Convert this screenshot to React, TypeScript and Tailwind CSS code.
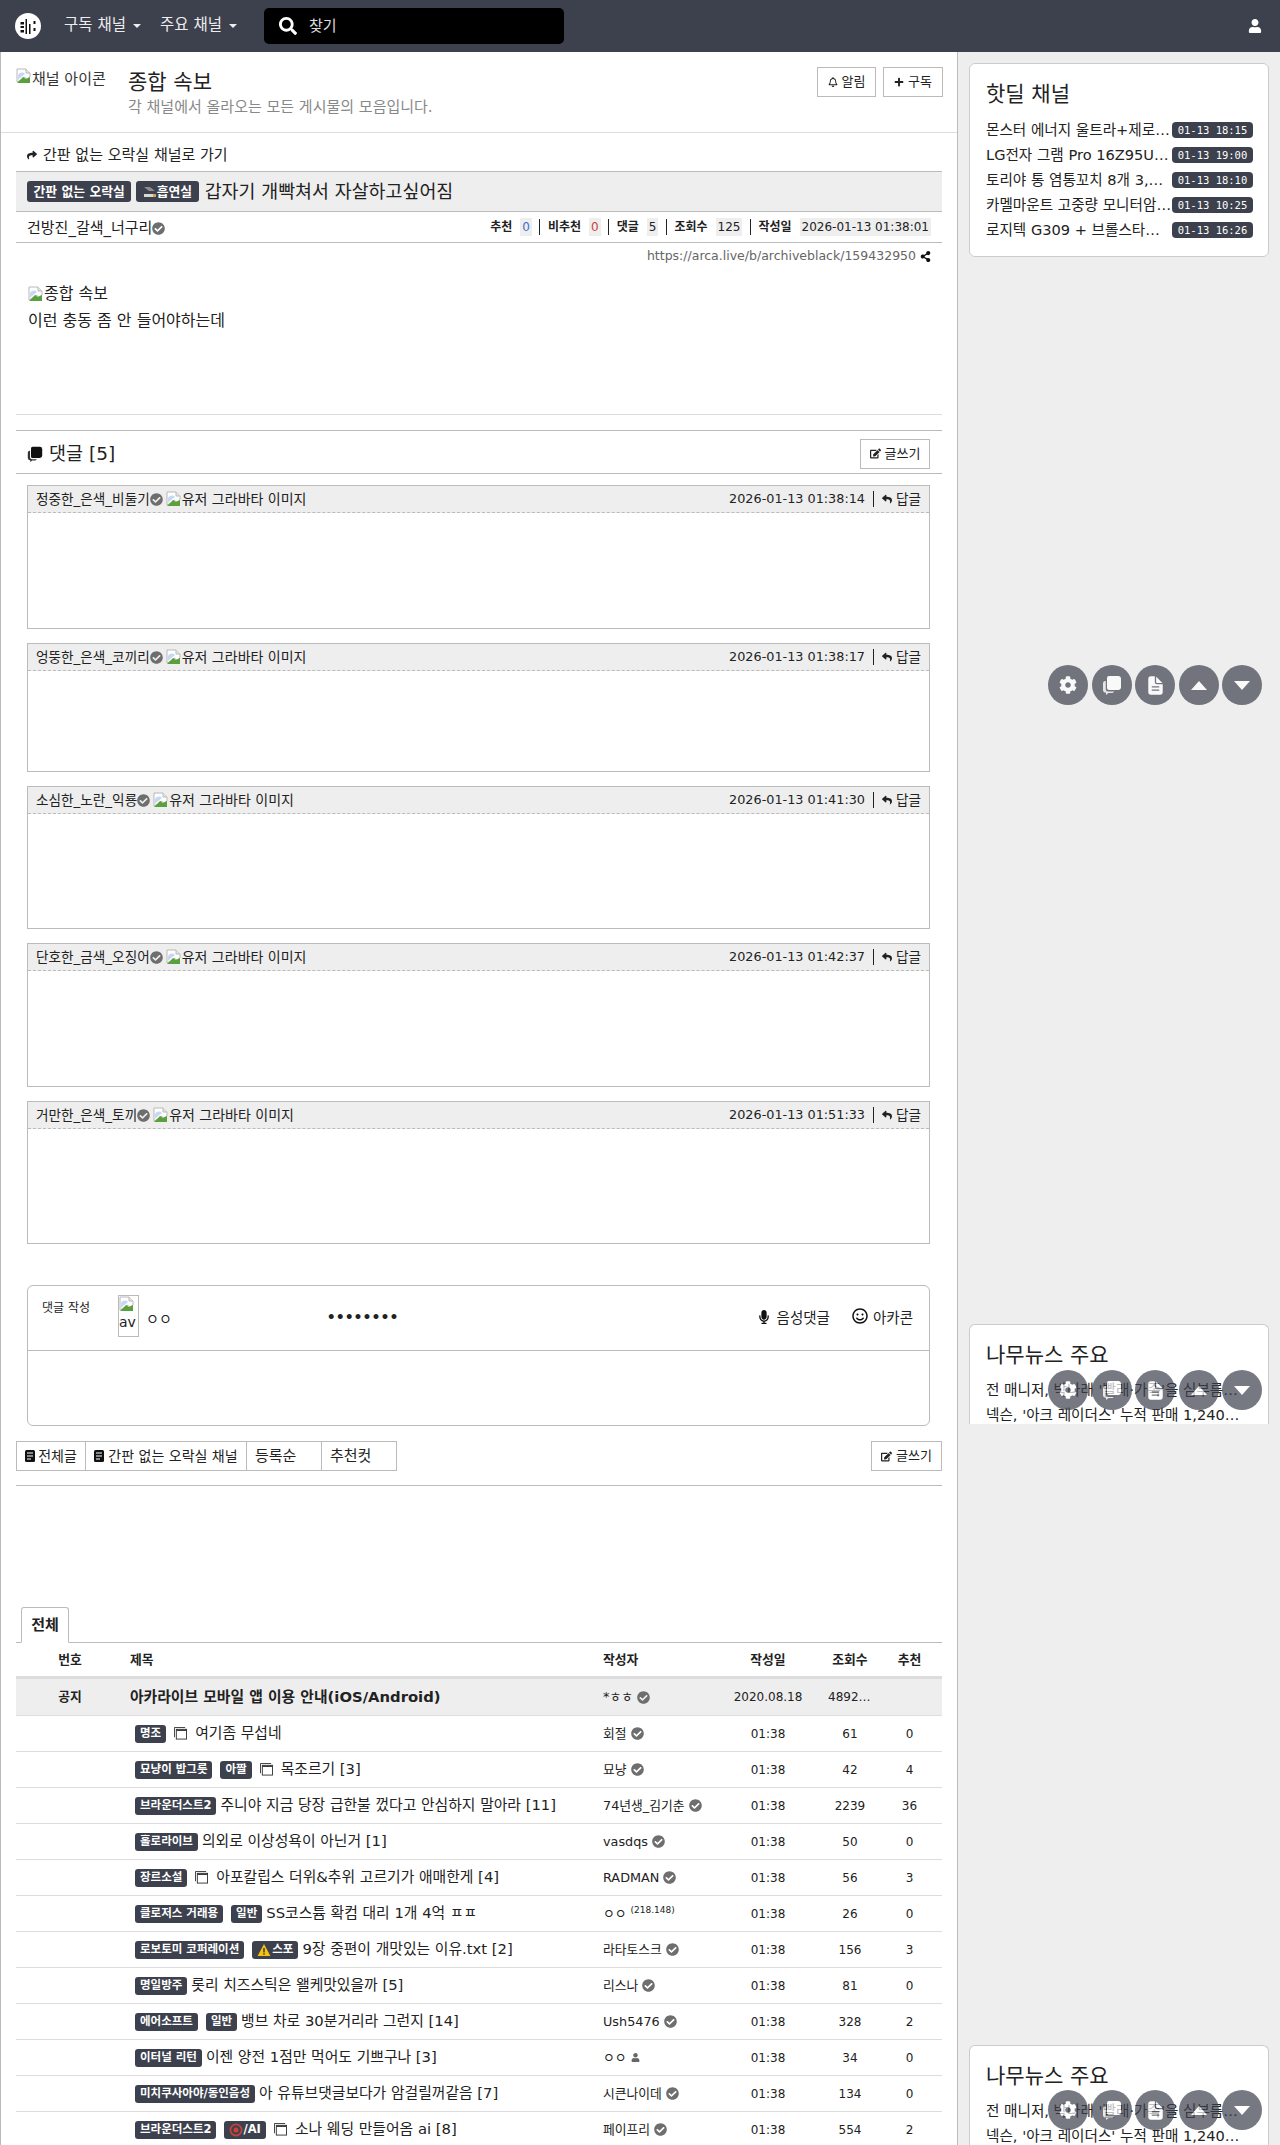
import type { ReactNode } from 'react';
import {
  FaCheckCircle,
  FaCog,
  FaEdit,
  FaMicrophone,
  FaPlus,
  FaRegBell,
  FaRegSmile,
  FaReply,
  FaSearch,
  FaShare,
  FaShareAlt,
  FaUser,
} from 'react-icons/fa';
import { IoDocumentText } from 'react-icons/io5';

type Row = {
  tags: ReactNode[];
  photo?: boolean;
  title: string;
  author: string;
  mark?: 'check' | 'ip' | 'user';
  views: string;
  up: string;
};

const rows: Row[] = [
  { tags: ['명조'], photo: true, title: '여기좀 무섭네', author: '회절', views: '61', up: '0' },
  { tags: ['묘냥이 밥그릇', '아짤'], photo: true, title: '목조르기 [3]', author: '묘냥', views: '42', up: '4' },
  { tags: ['브라운더스트2'], title: '주니야 지금 당장 급한불 껐다고 안심하지 말아라 [11]', author: '74년생_김기춘', views: '2239', up: '36' },
  { tags: ['홀로라이브'], title: '의외로 이상성욕이 아닌거 [1]', author: 'vasdqs', views: '50', up: '0' },
  { tags: ['장르소설'], photo: true, title: '아포칼립스 더위&추위 고르기가 애매한게 [4]', author: 'RADMAN', views: '56', up: '3' },
  { tags: ['클로저스 거래용', '일반'], title: 'SS코스튬 확컴 대리 1개 4억 ㅍㅍ', author: 'ㅇㅇ', mark: 'ip', views: '26', up: '0' },
  { tags: ['로보토미 코퍼레이션', <><WarnIcon />스포</>], title: '9장 중편이 개맛있는 이유.txt [2]', author: '라타토스크', views: '156', up: '3' },
  { tags: ['명일방주'], title: '롯리 치즈스틱은 왤케맛있을까 [5]', author: '리스나', views: '81', up: '0' },
  { tags: ['에어소프트', '일반'], title: '뱅브 차로 30분거리라 그런지 [14]', author: 'Ush5476', views: '328', up: '2' },
  { tags: ['이터널 리턴'], title: '이젠 양전 1점만 먹어도 기쁘구나 [3]', author: 'ㅇㅇ', mark: 'user', views: '34', up: '0' },
  { tags: ['미치쿠사아야/동인음성'], title: '아 유튜브댓글보다가 암걸릴꺼같음 [7]', author: '시큰나이데', views: '134', up: '0' },
  { tags: ['브라운더스트2', <><AdultIcon />/AI</>], photo: true, title: '소나 웨딩 만들어옴 ai [8]', author: '페이프리', views: '554', up: '2' },
];

const comments = [
  { name: '정중한_은색_비둘기', time: '2026-01-13 01:38:14', h: 'h-[144px]' },
  { name: '엉뚱한_은색_코끼리', time: '2026-01-13 01:38:17', h: 'h-[129px]' },
  { name: '소심한_노란_익룡', time: '2026-01-13 01:41:30', h: 'h-[143px]' },
  { name: '단호한_금색_오징어', time: '2026-01-13 01:42:37', h: 'h-[144px]' },
  { name: '거만한_은색_토끼', time: '2026-01-13 01:51:33', h: 'h-[143px]' },
];

const deals = [
  ['몬스터 에너지 울트라+제로 슈거 355ml 24캔', '01-13 18:15'],
  ['LG전자 그램 Pro 16Z95U-GS5WK 노트북', '01-13 19:00'],
  ['토리야 통 염통꼬치 8개 3,900원 무료배송', '01-13 18:10'],
  ['카멜마운트 고중량 모니터암 싱글 CMA-2', '01-13 10:25'],
  ['로지텍 G309 + 브롤스타즈 마우스패드 세트', '01-13 16:26'],
];

function LogoIcon() {
  return (
    <svg viewBox="0 0 26 26" className="h-[26px] w-[26px]">
      <circle cx="13" cy="13" r="13" fill="#fff" />
      <rect x="5.5" y="9" width="3.5" height="2.5" fill="#111" />
      <rect x="5.5" y="13" width="3.5" height="2" fill="#111" />
      <rect x="5.5" y="17" width="3.5" height="2.5" fill="#111" />
      <rect x="10.5" y="6" width="1.5" height="15" fill="#111" />
      <rect x="14" y="11" width="1.5" height="10" fill="#111" />
      <rect x="18.5" y="8" width="2" height="3" fill="#111" />
      <rect x="18.5" y="15" width="2" height="3" fill="#111" />
    </svg>
  );
}

function BrokenImage() {
  return (
    <svg viewBox="0 0 16 16" className="h-4 w-4 shrink-0">
      <path d="M1 1h9l4 4v4l-3 2-3-2-3 3-4 2z" fill="#fff" stroke="#b9b9b9" strokeWidth="1" />
      <path d="M2 7c2-3 5-3 7-1l-5 4-2 2z" fill="#c6d8f4" />
      <path d="M1 15l6-6 3 2 4-2v6z" fill="#5aa13d" />
      <path d="M10 1v4h4" fill="#e8e8e8" stroke="#b9b9b9" />
    </svg>
  );
}

function WarnIcon() {
  return (
    <svg viewBox="0 0 14 14" className="mr-px h-3.5 w-3.5">
      <path d="M7 1l6.4 12H.6z" fill="#f5c211" />
      <rect x="6.3" y="5" width="1.4" height="4.5" fill="#333" />
      <rect x="6.3" y="10.3" width="1.4" height="1.4" fill="#333" />
    </svg>
  );
}

function AdultIcon() {
  return (
    <svg viewBox="0 0 14 14" className="h-3.5 w-3.5">
      <circle cx="7" cy="7" r="5.6" fill="none" stroke="#c9423a" strokeWidth="1.8" />
      <circle cx="7" cy="7" r="2.5" fill="#c9423a" />
    </svg>
  );
}

function SmokeIcon() {
  return (
    <svg viewBox="0 0 14 14" className="h-3.5 w-3.5">
      <path d="M1 2h6l5 4H6z" fill="#8d8d8d" />
      <rect x="1" y="9" width="9" height="3" fill="#d8d8d8" />
      <rect x="10" y="9" width="3" height="3" fill="#e0a040" />
    </svg>
  );
}

function PhotosIcon() {
  return (
    <svg viewBox="0 0 14 14" className="h-[13px] w-[13px] shrink-0" fill="none" stroke="#333" strokeWidth="1">
      <path d="M.5 11V.5H12" />
      <rect x="2.5" y="2.5" width="11" height="10.5" fill="#fff" />
      <path d="M2.5 3.5h11" strokeWidth="1.5" />
    </svg>
  );
}

// stacked chat bubbles, same shape in the heading and on the floating button
function ChatsIcon({ className }: { className: string }) {
  return (
    <svg viewBox="0 0 20 20" className={className} fill="currentColor">
      <path d="M7 1h9a3 3 0 0 1 3 3v8a3 3 0 0 1-3 3H7a2 2 0 0 1-2-2V3a2 2 0 0 1 2-2z" />
      <path d="M3.8 6v8a2.5 2.5 0 0 0 2.5 2.5h6.2l-2 1.5H6.5L4 20v-2.2A3 3 0 0 1 1 15V8a2.5 2.5 0 0 1 2.8-2z" opacity=".85" />
    </svg>
  );
}

function ListIcon() {
  return (
    <svg viewBox="0 0 10 12" className="h-3 w-[10px] shrink-0">
      <rect width="10" height="12" rx="1.5" fill="#111" />
      <path d="M2 3h6M2 6h6M2 9h4" stroke="#fff" strokeWidth="1.2" />
    </svg>
  );
}

function Check() {
  return <FaCheckCircle className="shrink-0 text-[13px] text-[#6e6e6e]" />;
}

function Tag({ children }: { children: ReactNode }) {
  return (
    <span className="inline-flex h-[18px] items-center rounded-[3px] bg-[#3d414d] px-[5px] text-[11.5px] font-bold whitespace-nowrap text-white">
      {children}
    </span>
  );
}

function OutlineBtn({ children, className }: { children: ReactNode; className: string }) {
  return (
    <div className={`flex items-center justify-center gap-1 border border-[#bbb] bg-white text-[13px] text-[#222] ${className}`}>
      {children}
    </div>
  );
}

function Floaters({ className }: { className: string }) {
  return (
    <div className={`absolute left-[1048px] flex gap-[3.5px] opacity-70 ${className}`}>
      <Floater><FaCog className="text-[18px]" /></Floater>
      <Floater><ChatsIcon className="h-5 w-5" /></Floater>
      <Floater><IoDocumentText className="text-[21px]" /></Floater>
      <Floater><span className="h-0 w-0 border-x-[8px] border-b-[9px] border-x-transparent border-b-white" /></Floater>
      <Floater><span className="h-0 w-0 border-x-[8px] border-t-[9px] border-x-transparent border-t-white" /></Floater>
    </div>
  );
}

function Floater({ children }: { children: ReactNode }) {
  return <div className="flex h-10 w-10 items-center justify-center rounded-full bg-[#3d414d] text-white">{children}</div>;
}

function Comment({ name, time, h }: { name: string; time: string; h: string }) {
  return (
    <div className={`mr-[12px] mb-[14px] ml-[11px] border border-[#bbb] ${h}`}>
      <div className="flex h-[27px] items-center border-b border-dashed border-[#bbb] bg-[#eee] pr-2 pl-2 text-[13.6px] text-[#222]">
        <span>{name}</span>
        <Check />
        <span className="ml-[3px] flex items-center text-[14px]"><BrokenImage />유저 그라바타 이미지</span>
        <span className="ml-auto text-[12.8px]">{time}</span>
        <span className="mx-2 h-4 w-px bg-[#222]" />
        <FaReply className="mr-1 text-[10px]" />
        <span>답글</span>
      </div>
    </div>
  );
}

function Stat({ label, value, color }: { label: string; value: string; color?: string }) {
  return (
    <>
      <span className="font-bold">{label}</span>
      <span className={`ml-2 bg-[#eee] px-0.5 ${color ?? ''}`}>{value}</span>
    </>
  );
}

function Sep() {
  return <span className="mx-[7.5px] h-4 w-px bg-[#222]" />;
}

function NewsCard({ className }: { className: string }) {
  return (
    <div className={`mx-[11px] overflow-hidden rounded-t-md border-x border-t border-[#ccc] bg-white pt-[15px] pr-[26px] pl-4 ${className}`}>
      <div className="text-[21px] leading-[30px] text-[#222]">나무뉴스 주요</div>
      <div className="mt-[7px] truncate text-[14.6px] leading-[25px] text-[#222]">전 매니저, 박나래 '빨래·가족'을 심부름 시켰다 주장</div>
      <div className="truncate text-[14.6px] leading-[25px] text-[#222]">넥슨, '아크 레이더스' 누적 판매 1,240만장 돌파했다</div>
    </div>
  );
}

export default function App() {
  return (
    <div className="relative h-[2145px] overflow-hidden bg-[#eee] [font-family:'DejaVu_Sans','Noto_Sans_CJK_KR',sans-serif]">
      <header className="flex h-[52px] items-center bg-[#3d414d] text-[15.5px] text-[#eee]">
        <div className="ml-[15px]"><LogoIcon /></div>
        <div className="ml-[23px] flex w-[96px] items-center gap-[7px]">구독 채널<span className="h-0 w-0 border-x-[4px] border-t-[4px] border-x-transparent border-t-[#eee]" /></div>
        <div className="flex w-[104px] items-center gap-[7px]">주요 채널<span className="h-0 w-0 border-x-[4px] border-t-[4px] border-x-transparent border-t-[#eee]" /></div>
        <div className="flex h-9 w-[300px] items-center rounded-[5px] bg-black pl-[15px] text-[15px] text-[#ddd]">
          <FaSearch className="text-[18px] text-white" />
          <span className="ml-3">찾기</span>
        </div>
        <FaUser className="mr-[18px] ml-auto text-[14px] text-white" />
      </header>

      <div className="flex">
        <main className="h-[2093px] w-[958px] shrink-0 border-x border-[#bbb] bg-white">
          <section className="relative flex h-[81px] border-b border-[#ddd] pl-[15px]">
            <div className="mt-[16px] flex h-[20px] w-[112px] shrink-0 items-start overflow-hidden text-[15px] whitespace-nowrap text-[#333]"><span className="flex w-[96px] overflow-hidden"><BrokenImage />채널 아이콘</span></div>
            <div>
              <h1 className="mt-[17px] text-[21px] leading-[26px] text-[#222]">종합 속보</h1>
              <p className="mt-[2px] text-[15px] leading-5 text-[#888]">각 채널에서 올라오는 모든 게시물의 모음입니다.</p>
            </div>
            <div className="absolute top-[15px] right-[14px] flex gap-[7px]">
              <OutlineBtn className="h-[30px] w-[59px]"><FaRegBell className="text-[10px]" />알림</OutlineBtn>
              <OutlineBtn className="h-[30px] w-[60px]"><FaPlus className="text-[10px]" />구독</OutlineBtn>
            </div>
          </section>

          <div className="px-[15px]">
            <div className="flex h-[38px] items-center pt-[6px] pl-[11px] text-[15px] text-[#222]">
              <FaShare className="mr-[6px] text-[10px]" />간판 없는 오락실 채널로 가기
            </div>
            <div className="flex h-[41px] items-center gap-[5px] border-y border-[#bbb] bg-[#eee] pl-[11px]">
              <span className="inline-flex h-[21px] items-center rounded-[3px] bg-[#3d414d] px-[6.5px] text-[12.8px] font-bold text-white">간판 없는 오락실</span>
              <span className="inline-flex h-[21px] items-center rounded-[3px] bg-[#3d414d] px-[6.5px] text-[12.8px] font-bold text-white"><SmokeIcon />흡연실</span>
              <span className="ml-px text-[18.4px] text-[#222]">갑자기 개빡쳐서 자살하고싶어짐</span>
            </div>
            <div className="flex h-[31px] items-center border-b border-[#bbb] pr-[11px] pl-[11px] text-[12px] text-[#222]">
              <span className="mr-auto flex items-center pt-[2px] text-[15px]">건방진_갈색_너구리<Check /></span>
              <Stat label="추천" value="0" color="text-[#3d6fd0]" /><Sep />
              <Stat label="비추천" value="0" color="text-[#c9423a]" /><Sep />
              <Stat label="댓글" value="5" /><Sep />
              <Stat label="조회수" value="125" /><Sep />
              <Stat label="작성일" value="2026-01-13 01:38:01" />
            </div>
            <div className="flex h-[26px] items-center justify-end pr-[11px] text-[12.5px] text-[#666]">
              https://arca.live/b/archiveblack/159432950<FaShareAlt className="ml-1 text-[11px] text-[#111]" />
            </div>

            <div className="h-[146px] border-b border-[#ddd] pt-[14px] pl-[12px] text-[16px] text-[#222]">
              <div className="flex h-[21px] items-center"><BrokenImage />종합 속보</div>
              <div className="mt-[6px] leading-[21px]">이런 충동 좀 안 들어야하는데</div>
            </div>

            <div className="mt-[15px] flex h-[44px] items-center border-y border-[#bbb] pt-[3px] pr-3 pl-[11px]">
              <ChatsIcon className="mr-[6px] h-4 w-4 text-[#111]" />
              <span className="text-[18.5px] text-[#222]">댓글 [5]</span>
              <OutlineBtn className="ml-auto h-[30px] w-[70px]"><FaEdit className="text-[11px]" />글쓰기</OutlineBtn>
            </div>

            <div className="mt-[11px]">
              {comments.map((c) => <Comment key={c.name} {...c} />)}
            </div>

            <div className="mt-[41px] mr-[12px] ml-[11px] h-[141px] rounded-md border border-[#bbb]">
              <div className="flex h-[65px] border-b border-[#bbb] text-[14.5px] text-[#222]">
                <span className="mt-[13px] ml-[14px] w-[76px] text-[12px]">댓글 작성</span>
                <div className="mt-[9px] h-[42px] w-[21px] overflow-hidden border border-[#bbb] text-[14px]"><BrokenImage />av</div>
                <span className="mt-[23px] ml-[7px] text-[14px]">ㅇㅇ</span>
                <span className="mt-[21px] ml-[155px] text-[14px] font-bold">••••••••</span>
                <span className="mt-[22px] ml-auto flex items-start gap-[6px]"><FaMicrophone className="mt-[2px] text-[14px] text-[#111]" />음성댓글</span>
                <span className="mt-[22px] mr-[16px] ml-[22px] flex items-start gap-[5px]"><FaRegSmile className="text-[16px] text-[#111]" />아카콘</span>
              </div>
            </div>

            <div className="mt-[15px] flex h-[45px] items-start border-b border-[#bbb] text-[14px] text-[#222]">
              <div className="flex h-[30px] w-[70px] items-center justify-center gap-[3px] border border-[#bbb]"><ListIcon />전체글</div>
              <div className="flex h-[30px] w-[161px] items-center justify-center gap-[4px] border border-l-0 border-[#bbb]"><ListIcon />간판 없는 오락실 채널</div>
              <div className="flex h-[30px] w-[75px] items-center border border-l-0 border-[#bbb] pl-2 text-[15px]">등록순</div>
              <div className="flex h-[30px] w-[75px] items-center border border-l-0 border-[#bbb] pl-2 text-[15px]">추천컷</div>
              <OutlineBtn className="ml-auto h-[30px] w-[71px]"><FaEdit className="text-[11px]" />글쓰기</OutlineBtn>
            </div>

            <div className="mt-[121px] flex h-[36px] items-end border-b border-[#bbb] pl-[5px]">
              <div className="-mb-px flex h-[36px] w-[48px] items-center justify-center rounded-t-[3px] border border-b-white border-[#bbb] bg-white text-[15px] font-bold text-[#222]">전체</div>
            </div>

            <div className="flex h-[36px] items-center border-b-[3px] border-[#ddd] text-[12.8px] font-bold text-[#222]">
              <div className="w-[108px] text-center">번호</div>
              <div className="w-[473px] pl-[6px]">제목</div>
              <div className="w-[127px] pl-[6px]">작성자</div>
              <div className="w-[88px] text-center">작성일</div>
              <div className="w-[76px] text-center">조회수</div>
              <div className="w-[43px] text-center">추천</div>
            </div>

            <div className="flex h-[37px] items-center border-b border-[#ddd] bg-[#eee] text-[13px] text-[#222]">
              <div className="w-[108px] text-center text-[12.8px] font-bold">공지</div>
              <div className="w-[473px] pl-[6px] text-[14.8px] font-bold">아카라이브 모바일 앱 이용 안내(iOS/Android)</div>
              <div className="flex w-[127px] items-center gap-1 pl-[6px] text-[12.8px]">*ㅎㅎ<Check /></div>
              <div className="w-[88px] text-center text-[12px]">2020.08.18</div>
              <div className="w-[76px] truncate px-4 text-center text-[12px]">48927283</div>
              <div className="w-[43px]" />
            </div>

            {rows.map((r) => (
              <div key={r.title} className="flex h-9 items-center border-b border-[#ddd] text-[12px] text-[#222]">
                <div className="w-[108px]" />
                <div className="flex w-[473px] items-center pl-[11px] text-[14.8px] whitespace-nowrap">
                  {r.tags.map((t, i) => (
                    <span key={i} className="mr-2 inline-flex"><Tag>{t}</Tag></span>
                  ))}
                  {r.photo && <span className="mr-3"><PhotosIcon /></span>}
                  <span className="-ml-1">{r.title}</span>
                </div>
                <div className="flex w-[127px] items-center gap-1 pl-[6px] text-[12.8px] whitespace-nowrap">
                  {r.author}
                  {r.mark === undefined && <Check />}
                  {r.mark === 'ip' && <span className="-mt-[6px] text-[9px]">(218.148)</span>}
                  {r.mark === 'user' && <FaUser className="text-[9px] text-[#666]" />}
                </div>
                <div className="w-[88px] text-center">01:38</div>
                <div className="w-[76px] text-center">{r.views}</div>
                <div className="w-[43px] text-center">{r.up}</div>
              </div>
            ))}
          </div>
        </main>

        <aside className="min-w-0 flex-1 pt-[11px]">
          <div className="mx-[11px] h-[194px] rounded-md border border-[#ccc] bg-white pt-[15px] pr-[15px] pl-4">
            <div className="text-[21px] leading-[30px] text-[#222]">핫딜 채널</div>
            <div className="mt-[9px]">
              {deals.map(([t, d]) => (
                <div key={d} className="flex h-[24.8px] items-center">
                  <span className="min-w-0 flex-1 truncate text-[14.6px] text-[#222]">{t}</span>
                  <span className="h-4 w-[81px] shrink-0 rounded-[4px] bg-[#3d414d] text-center font-['DejaVu_Sans_Mono',monospace] text-[10.5px] leading-4 text-white">{d}</span>
                </div>
              ))}
            </div>
          </div>
          <NewsCard className="mt-[1067px] h-[100px]" />
          <NewsCard className="mt-[621px] h-[120px]" />
        </aside>
      </div>

      <Floaters className="top-[665px]" />
      <Floaters className="top-[1370px]" />
      <Floaters className="top-[2090px]" />
    </div>
  );
}
